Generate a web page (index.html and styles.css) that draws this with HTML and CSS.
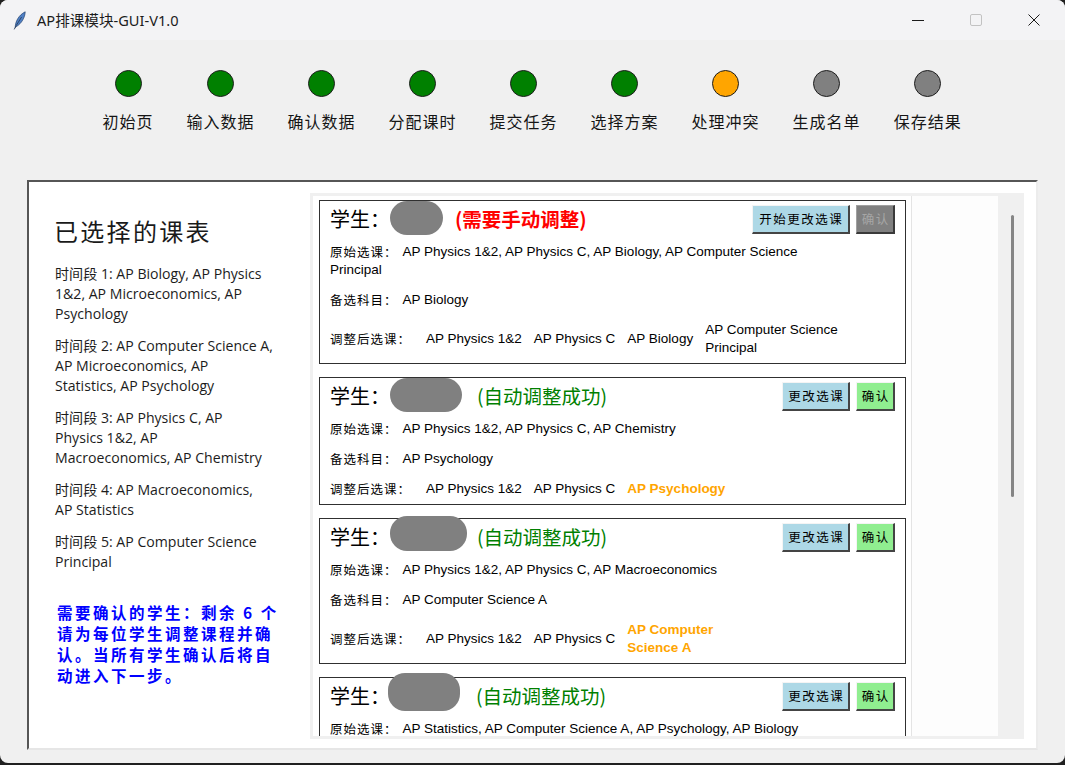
FILE: index.html
```html
<!DOCTYPE html>
<html lang="zh">
<head>
<meta charset="utf-8">
<title>AP排课模块-GUI-V1.0</title>
<link rel="stylesheet" href="styles.css">
</head>
<body>
<div class="window">
  <div class="titlebar">
    <svg class="app-icon" width="13" height="19" viewBox="0 0 13 19">
      <path d="M2.2 16.5 C2.4 10.5 5.5 4.2 12.2 0.8 C12 6.5 8.6 12.4 3.4 15.6 Z" fill="#4f7fc4" stroke="#23426f" stroke-width="0.7"/>
      <path d="M1.2 18.4 L3.2 14.6 L8.6 6" fill="none" stroke="#2a3f5f" stroke-width="0.9"/>
    </svg>
    <span class="app-title">AP排课模块-GUI-V1.0</span>
    <div class="caption">
      <span class="cap-btn"><svg width="12" height="12" viewBox="0 0 12 12"><path d="M0 6.5 H12" stroke="#1a1a1a" stroke-width="1"/></svg></span>
      <span class="cap-btn"><svg width="12" height="12" viewBox="0 0 12 12"><rect x="0.5" y="0.5" width="11" height="11" rx="1.5" fill="none" stroke="#c2c2c2" stroke-width="1"/></svg></span>
      <span class="cap-btn"><svg width="12" height="12" viewBox="0 0 12 12"><path d="M0.5 0.5 L11.5 11.5 M11.5 0.5 L0.5 11.5" stroke="#1a1a1a" stroke-width="1"/></svg></span>
    </div>
  </div>

  <div class="steps">
    <div class="step"><span class="dot done"></span><span class="step-label">初始页</span></div>
    <div class="step"><span class="dot done"></span><span class="step-label">输入数据</span></div>
    <div class="step"><span class="dot done"></span><span class="step-label">确认数据</span></div>
    <div class="step"><span class="dot done"></span><span class="step-label">分配课时</span></div>
    <div class="step"><span class="dot done"></span><span class="step-label">提交任务</span></div>
    <div class="step"><span class="dot done"></span><span class="step-label">选择方案</span></div>
    <div class="step"><span class="dot current"></span><span class="step-label">处理冲突</span></div>
    <div class="step"><span class="dot todo"></span><span class="step-label">生成名单</span></div>
    <div class="step"><span class="dot todo"></span><span class="step-label">保存结果</span></div>
  </div>

  <div class="frame">
    <div class="left">
      <div class="left-title">已选择的课表</div>
      <div class="slots">
        <p>时间段 1: AP Biology, AP Physics<br>1&amp;2, AP Microeconomics, AP<br>Psychology</p>
        <p>时间段 2: AP Computer Science A,<br>AP Microeconomics, AP<br>Statistics, AP Psychology</p>
        <p>时间段 3: AP Physics C, AP<br>Physics 1&amp;2, AP<br>Macroeconomics, AP Chemistry</p>
        <p>时间段 4: AP Macroeconomics,<br>AP Statistics</p>
        <p>时间段 5: AP Computer Science<br>Principal</p>
      </div>
      <div class="note">需要确认的学生：剩余 6 个<br>请为每位学生调整课程并确<br>认。当所有学生确认后将自<br>动进入下一步。</div>
    </div>

    <div class="canvas">
      <div class="list">
        <div class="card">
          <div class="card-head">
            <span class="who">学生：</span><span class="blob blob-1"></span><span class="status manual">(需要手动调整)</span>
            <span class="btns"><span class="btn btn-blue btn-wide">开始更改选课</span><span class="btn btn-off btn-ok">确认</span></span>
          </div>
          <div class="row first"><span class="k">原始选课：</span><span class="v">AP Physics 1&amp;2, AP Physics C, AP Biology, AP Computer Science<br>Principal</span></div>
          <div class="row"><span class="k">备选科目：</span><span class="v">AP Biology</span></div>
          <div class="row adj"><span class="k k-adj">调整后选课：</span><span class="item">AP Physics 1&amp;2</span><span class="item">AP Physics C</span><span class="item">AP Biology</span><span class="item">AP Computer Science<br>Principal</span></div>
        </div>

        <div class="card">
          <div class="card-head">
            <span class="who">学生：</span><span class="blob blob-2"></span><span class="status auto">(自动调整成功)</span>
            <span class="btns"><span class="btn btn-blue btn-mid">更改选课</span><span class="btn btn-green btn-ok">确认</span></span>
          </div>
          <div class="row first"><span class="k">原始选课：</span><span class="v">AP Physics 1&amp;2, AP Physics C, AP Chemistry</span></div>
          <div class="row"><span class="k">备选科目：</span><span class="v">AP Psychology</span></div>
          <div class="row adj"><span class="k k-adj">调整后选课：</span><span class="item">AP Physics 1&amp;2</span><span class="item">AP Physics C</span><span class="item new">AP Psychology</span></div>
        </div>

        <div class="card">
          <div class="card-head">
            <span class="who">学生：</span><span class="blob blob-3"></span><span class="status auto">(自动调整成功)</span>
            <span class="btns"><span class="btn btn-blue btn-mid">更改选课</span><span class="btn btn-green btn-ok">确认</span></span>
          </div>
          <div class="row first"><span class="k">原始选课：</span><span class="v">AP Physics 1&amp;2, AP Physics C, AP Macroeconomics</span></div>
          <div class="row"><span class="k">备选科目：</span><span class="v">AP Computer Science A</span></div>
          <div class="row adj"><span class="k k-adj">调整后选课：</span><span class="item">AP Physics 1&amp;2</span><span class="item">AP Physics C</span><span class="item new">AP Computer<br>Science A</span></div>
        </div>

        <div class="card">
          <div class="card-head">
            <span class="who">学生：</span><span class="blob blob-4"></span><span class="status auto">(自动调整成功)</span>
            <span class="btns"><span class="btn btn-blue btn-mid">更改选课</span><span class="btn btn-green btn-ok">确认</span></span>
          </div>
          <div class="row first"><span class="k">原始选课：</span><span class="v">AP Statistics, AP Computer Science A, AP Psychology, AP Biology</span></div>
        </div>
      </div>
    </div>

    <div class="scrollbar"><span class="thumb"></span></div>
  </div>
</div>
</body>
</html>
```

FILE: styles.css
```css
* { box-sizing: border-box; }

html, body {
  margin: 0;
  padding: 0;
  background: #202020;
}

body {
  width: 1065px;
  height: 765px;
  overflow: hidden;
  font-family: "Noto Sans", "Noto Sans CJK SC", sans-serif;
  color: #111;
}

.window {
  width: 1065px;
  height: 763px;
  background: #f0f0f0;
  border-radius: 8px;
  overflow: hidden;
}

/* ---------- title bar ---------- */
.titlebar {
  height: 40px;
  display: flex;
  align-items: center;
  padding-left: 13px;
  background: #f3f3f5;
}

.app-icon {
  margin-right: 11px;
  margin-top: 1px;
}

.app-title {
  font-family: "Noto Sans", "Noto Sans CJK SC", sans-serif;
  font-size: 14.6px;
  color: #1b1b1b;
  margin-top: -1px;
}

.caption {
  margin-left: auto;
  margin-right: 2px;
  display: flex;
  height: 40px;
}

.cap-btn {
  width: 58px;
  height: 40px;
  display: flex;
  align-items: center;
  justify-content: center;
}

/* ---------- steps ---------- */
.steps {
  height: 140px;
  display: flex;
  padding: 30px 0 0 86px;
}

.step {
  display: flex;
  flex-direction: column;
  align-items: center;
  padding: 0 16.5px;
}

.dot {
  width: 27px;
  height: 27px;
  border-radius: 50%;
  border: 1px solid #1e1e1e;
  margin-bottom: 14px;
}

.dot.done { background: #008000; }
.dot.current { background: #ffa500; }
.dot.todo { background: #808080; }

.step-label {
  font-family: "Noto Sans CJK SC", sans-serif;
  font-size: 16px;
  letter-spacing: 1px;
  line-height: 20px;
  color: #151515;
  white-space: nowrap;
}

/* ---------- main frame ---------- */
.frame {
  margin: 0 27px;
  height: 570px;
  display: flex;
  align-items: flex-start;
  background: #fff;
  border-top: 2px solid #565656;
  border-left: 2px solid #565656;
  border-right: 2px solid #ececec;
  border-bottom: 2px solid #e6e6e6;
}

.left {
  width: 281px;
  flex: none;
  padding: 36px 0 0 26px;
}

.left-title {
  font-family: "Noto Sans CJK SC", sans-serif;
  font-size: 24px;
  letter-spacing: 2.3px;
  line-height: 26px;
  color: #1a1a1a;
  margin: 0 0 20px -1px;
}

.slots p {
  margin: 0 0 12px;
  font-family: "Open Sans", "Noto Sans CJK SC", sans-serif;
  font-size: 14.1px;
  line-height: 20px;
  color: #1c1c1c;
  white-space: nowrap;
}

.note {
  margin: 30px 0 0 2px;
  font-family: "Noto Sans CJK SC", sans-serif;
  font-weight: bold;
  font-size: 15.5px;
  letter-spacing: 2.5px;
  line-height: 21px;
  color: #0000ff;
  white-space: nowrap;
}

/* ---------- scrolling canvas ---------- */
.canvas {
  width: 691px;
  height: 546px;
  margin-top: 11px;
  flex: none;
  background: #fdfdfd;
  border: 3px solid #f0f0f0;
  overflow: hidden;
}

.list {
  width: 599px;
  min-height: 100%;
  padding: 4px 5px 0 6px;
  background: #fff;
  border-right: 1px solid #e4e4e4;
}

.card {
  border: 1px solid #303030;
  margin-bottom: 13px;
  background: #fff;
}

.card-head {
  height: 34px;
  display: flex;
  align-items: center;
  padding: 0 10px;
}

.who {
  font-family: "Noto Sans CJK SC", sans-serif;
  font-size: 20px;
  width: 60px;
  color: #000;
}

.blob {
  height: 34px;
  background: #808080;
  border-radius: 17px;
  flex: none;
}

.blob-1 { width: 53px; margin-right: 12px; }
.blob-2 { width: 72px; margin-right: 15px; }
.blob-3 { width: 77px; height: 35px; margin-top: -5px; margin-right: 10px; }
.blob-4 { width: 72px; height: 38px; margin-top: -6px; margin-left: -2px; margin-right: 16px; }

.status {
  font-family: "Noto Sans CJK SC", sans-serif;
  font-size: 19.5px;
  white-space: nowrap;
}

.status.manual { color: #ff0000; font-weight: bold; }
.status.auto { color: #008000; }

.btns {
  margin-left: auto;
  display: flex;
  gap: 6px;
  margin-top: 2px;
}

.btn {
  height: 29px;
  display: flex;
  align-items: center;
  justify-content: center;
  font-family: "Noto Sans CJK SC", sans-serif;
  font-size: 12.5px;
  letter-spacing: 1.5px;
  padding-left: 1.5px;
  color: #000;
  border-top: 1px solid #f4f4f4;
  border-left: 1px solid #f4f4f4;
  border-right: 2px solid #444;
  border-bottom: 2px solid #444;
}

.btn-wide { width: 98px; }
.btn-mid { width: 68px; }
.btn-ok { width: 39px; }

.btn-blue { background: #add8e6; }
.btn-green { background: #90ee90; }
.btn-off {
  background: #808080;
  color: #a6a6a6;
  border-top-color: #a0a0a0;
  border-left-color: #a0a0a0;
  border-right-color: #3a3a3a;
  border-bottom-color: #3a3a3a;
}

.row {
  padding: 6px 10px;
  font-family: "Liberation Sans", "Noto Sans CJK SC", sans-serif;
  font-size: 13.5px;
  line-height: 18px;
  color: #000;
}

.row.first { padding-top: 8px; }

.row .k {
  font-family: "Noto Sans CJK SC", sans-serif;
  font-size: 12.5px;
  letter-spacing: 1px;
  line-height: 18px;
  vertical-align: top;
}

.row .v {
  margin-left: 5px;
}

.row.adj {
  display: flex;
  align-items: center;
}

.k-adj {
  width: 90px;
  flex: none;
}

.item {
  padding: 0 6px;
  white-space: nowrap;
}

.item.new {
  color: #ffa500;
  font-weight: bold;
}

/* ---------- scrollbar ---------- */
.scrollbar {
  width: 23px;
  height: 546px;
  margin-top: 11px;
  flex: none;
  background: #f0f0f0;
  padding: 22px 0 0 10px;
}

.thumb {
  display: block;
  width: 3px;
  height: 282px;
  border-radius: 2px;
  background: #858585;
}
```
